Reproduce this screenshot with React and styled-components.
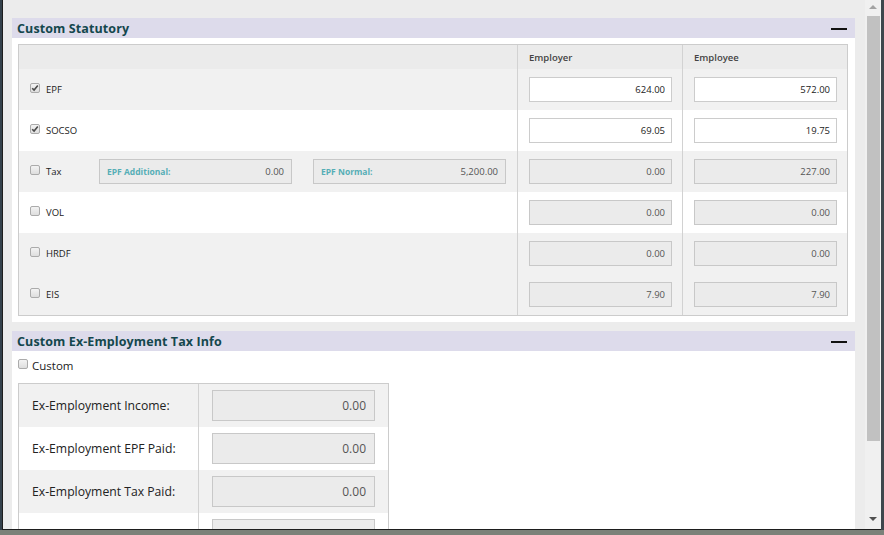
import React from 'react'
import styled, { createGlobalStyle } from 'styled-components'

const GlobalStyle = createGlobalStyle`
  html, body {
    margin: 0;
    padding: 0;
  }
  body {
    background: #7b8179;
    font-family: "Open Sans", "Liberation Sans", sans-serif;
  }
  * {
    box-sizing: border-box;
  }
`

const Desktop = styled.div`
  width: 884px;
  height: 535px;
  background: #7b8179;
  display: flex;
  align-items: flex-start;
  overflow: hidden;
`

const Edge = styled.div`
  width: ${p => p.$w}px;
  height: 530px;
  background: ${p => p.$bg};
  flex: none;
`

const Window = styled.div`
  width: 879px;
  height: 530px;
  flex: none;
  display: flex;
  background: #ececec;
  border-left: 1px solid #1e1e1e;
  border-bottom: 1px solid #1e1e1e;
`

const ScrollArea = styled.div`
  flex: 1;
  height: 100%;
  overflow: hidden;
  padding: 18px 10px 0 9px;
`

const Scrollbar = styled.div`
  width: 16px;
  flex: none;
  background: #f0f0f0;
  position: relative;
  display: flex;
  flex-direction: column;
  align-items: center;
  .thumb {
    width: 13px;
    height: 425px;
    margin-top: 16px;
    margin-left: 1px;
    background: #c1c1c1;
  }
  .arrow {
    position: absolute;
    left: 4px;
    width: 0;
    height: 0;
    border-left: 4px solid transparent;
    border-right: 4px solid transparent;
  }
  .up {
    top: 5px;
    border-bottom: 4px solid #a3a3a3;
  }
  .down {
    bottom: 8px;
    border-top: 4px solid #505050;
  }
`

const Section = styled.section`
  background: #fff;
  margin-bottom: 9px;
`

const SectionHeader = styled.div`
  height: 20px;
  background: #dddbeb;
  display: flex;
  align-items: center;
  justify-content: space-between;
  padding: 0 8px 0 5px;
  h3 {
    margin: 0;
    font-size: 12.5px;
    font-weight: 700;
    color: #14474d;
    letter-spacing: 0.1px;
  }
  .minus {
    width: 16px;
    height: 2px;
    background: #111;
    margin-top: 2px;
  }
`

const SectionBody = styled.div`
  padding: ${p => p.$pad};
`

const Grid = styled.div`
  border: 1px solid #cccccc;
  width: ${p => p.$w}px;
`

const Row = styled.div`
  display: grid;
  grid-template-columns: ${p => p.$cols};
  height: ${p => p.$h}px;
  background: ${p => p.$bg};
`

const Cell = styled.div`
  display: flex;
  align-items: center;
  padding: ${p => p.$pad};
  border-left: ${p => (p.$divider ? '1px solid #d2d2d2' : 'none')};
`

const HeadText = styled.span`
  font-size: 9.5px;
  font-weight: 600;
  color: #444;
`

const CheckBox = styled.span`
  width: 10px;
  height: 10px;
  flex: none;
  border: 1px solid #ababab;
  border-radius: 2px;
  background: linear-gradient(#f3f3f3, #dedede);
  display: inline-flex;
  align-items: center;
  justify-content: center;
  margin-top: ${p => p.$mt || 0}px;
`

const Label = styled.span`
  font-size: ${p => p.$size || 9.5}px;
  color: #222;
  margin-left: ${p => p.$ml || 6}px;
`

const CheckGroup = styled.div`
  display: flex;
  align-items: center;
  width: ${p => (p.$w ? `${p.$w}px` : 'auto')};
  flex: none;
`

const Field = styled.input`
  width: 100%;
  height: ${p => p.$h}px;
  border: 1px solid ${p => (p.disabled ? '#c8c8c8' : '#cccccc')};
  background: ${p => (p.disabled ? '#ebebeb' : '#ffffff')};
  color: ${p => (p.disabled ? '#555' : '#222')};
  font-family: "Open Sans", "Liberation Sans", sans-serif;
  font-size: ${p => p.$size}px;
  text-align: right;
  padding: 0 ${p => p.$padR}px 0 4px;
  outline: none;
  &:disabled {
    -webkit-text-fill-color: #555;
    opacity: 1;
  }
`

const InfoBox = styled.div`
  width: 193px;
  height: 25px;
  flex: none;
  margin-right: ${p => p.$mr || 0}px;
  display: flex;
  align-items: center;
  justify-content: space-between;
  padding: 0 7px 0 7px;
  background: #ebebeb;
  border: 1px solid #c8c8c8;
  .k {
    font-size: 8.5px;
    font-weight: 700;
    color: #55aeb6;
  }
  .v {
    font-size: 9.5px;
    color: #555;
  }
`

const CustomRow = styled.div`
  display: flex;
  align-items: center;
  height: 20px;
  margin-bottom: 8px;
`

const ExLabel = styled.span`
  font-size: 12.2px;
  color: #222;
`

function Tick() {
  return (
    <svg width="8" height="8" viewBox="0 0 8 8">
      <path d="M1.2 4.2 L3.1 6.1 L6.8 1.6" fill="none" stroke="#4a4a4a" strokeWidth="1.6" />
    </svg>
  )
}

const statutory = [
  { name: 'EPF', checked: true, er: '624.00', ee: '572.00', editable: true, bg: '#f1f1f1' },
  { name: 'SOCSO', checked: true, er: '69.05', ee: '19.75', editable: true, bg: '#ffffff' },
  { name: 'Tax', checked: false, er: '0.00', ee: '227.00', bg: '#f1f1f1', tax: true },
  { name: 'VOL', checked: false, er: '0.00', ee: '0.00', bg: '#ffffff' },
  { name: 'HRDF', checked: false, er: '0.00', ee: '0.00', bg: '#f1f1f1' },
  { name: 'EIS', checked: false, er: '7.90', ee: '7.90', bg: '#f1f1f1' },
]

const exRows = [
  { label: 'Ex-Employment Income:', bg: '#f1f1f1' },
  { label: 'Ex-Employment EPF Paid:', bg: '#ffffff' },
  { label: 'Ex-Employment Tax Paid:', bg: '#f1f1f1' },
  { label: '', bg: '#ffffff' },
]

const COLS = '498px 165px 165px'
const EX_COLS = '179px 190px'

export default function App() {
  return (
    <>
      <GlobalStyle />
      <Desktop>
        <Edge $w={2} $bg="#34414b" />
        <Window>
          <ScrollArea>
            <Section>
              <SectionHeader>
                <h3>Custom Statutory</h3>
                <span className="minus" />
              </SectionHeader>
              <SectionBody $pad="6px 7px 6px 6px">
                <Grid $w={830}>
                  <Row $cols={COLS} $h={24} $bg="#ebebeb">
                    <Cell />
                    <Cell $divider $pad="0 0 0 11px">
                      <HeadText>Employer</HeadText>
                    </Cell>
                    <Cell $divider $pad="0 0 0 11px">
                      <HeadText>Employee</HeadText>
                    </Cell>
                  </Row>
                  {statutory.map(r => (
                    <Row key={r.name} $cols={COLS} $h={41} $bg={r.bg}>
                      <Cell $pad="0 11px 0 11px">
                        <CheckGroup $w={r.tax ? 69 : 0}>
                          <CheckBox $mt={-3}>{r.checked && <Tick />}</CheckBox>
                          <Label>{r.name}</Label>
                        </CheckGroup>
                        {r.tax && (
                          <>
                            <InfoBox $mr={21}>
                              <span className="k">EPF Additional:</span>
                              <span className="v">0.00</span>
                            </InfoBox>
                            <InfoBox>
                              <span className="k">EPF Normal:</span>
                              <span className="v">5,200.00</span>
                            </InfoBox>
                          </>
                        )}
                      </Cell>
                      <Cell $divider $pad="0 10px 0 11px">
                        <Field readOnly disabled={!r.editable} value={r.er} $h={25} $size={9.5} $padR={6} />
                      </Cell>
                      <Cell $divider $pad="0 10px 0 11px">
                        <Field readOnly disabled={!r.editable} value={r.ee} $h={25} $size={9.5} $padR={6} />
                      </Cell>
                    </Row>
                  ))}
                </Grid>
              </SectionBody>
            </Section>
            <Section>
              <SectionHeader>
                <h3>Custom Ex-Employment Tax Info</h3>
                <span className="minus" />
              </SectionHeader>
              <SectionBody $pad="4px 6px 6px 6px">
                <CustomRow>
                  <CheckBox $mt={-2} />
                  <Label $size={11.5} $ml={4}>Custom</Label>
                </CustomRow>
                <Grid $w={371}>
                  {exRows.map((r, i) => (
                    <Row key={i} $cols={EX_COLS} $h={43} $bg={r.bg}>
                      <Cell $pad="0 0 0 13px">
                        <ExLabel>{r.label}</ExLabel>
                      </Cell>
                      <Cell $divider $pad="0 13px 0 13px">
                        <Field readOnly disabled value="0.00" $h={31} $size={12} $padR={8} />
                      </Cell>
                    </Row>
                  ))}
                </Grid>
              </SectionBody>
            </Section>
          </ScrollArea>
          <Scrollbar>
            <span className="arrow up" />
            <div className="thumb" />
            <span className="arrow down" />
          </Scrollbar>
        </Window>
        <Edge $w={3} $bg="#3f464d" />
      </Desktop>
    </>
  )
}
